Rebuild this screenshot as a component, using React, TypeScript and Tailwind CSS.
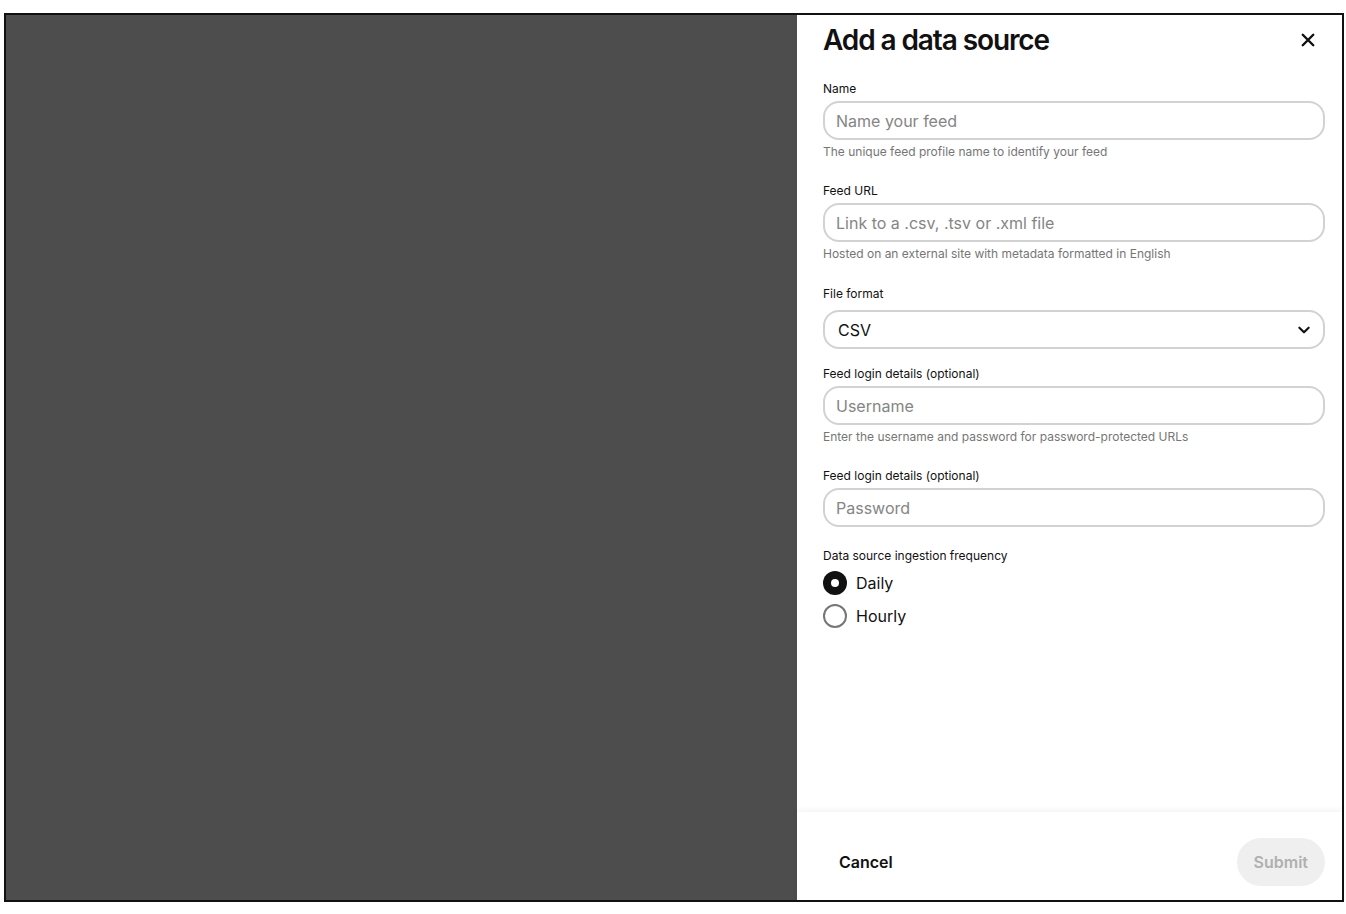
import React from "react";

const font = { fontFamily: "Inter, 'Liberation Sans', sans-serif" };

function Label({ children }: { children: React.ReactNode }) {
  return <div className="text-[12px] leading-4 text-[#111]">{children}</div>;
}

function Help({ children }: { children: React.ReactNode }) {
  return <div className="mt-1 text-[12px] leading-4 text-[#767676]">{children}</div>;
}

function Input({ placeholder }: { placeholder: string }) {
  return (
    <div className="mt-[4px] flex h-[39px] items-center rounded-2xl border-2 border-[#d2d2d2] px-[11px] text-[16px] text-[#858585]">
      {placeholder}
    </div>
  );
}

export default function App() {
  return (
    <div className="h-[914px] w-[1346px] bg-white pl-[4px] pt-[13px]" style={font}>
      <div className="flex h-[889px] w-[1340px] border-2 border-[#111]">
        <div className="flex-1 bg-[#4d4d4d]" />
        <div className="flex w-[545px] flex-col bg-white">
          <div className="flex-1 pl-[26px] pr-[17px] pt-[7px]">
            <div className="flex items-center justify-between">
              <h1 className="text-[28px] font-semibold leading-[36px] tracking-[-1.1px] text-[#111]">
                Add a data source
              </h1>
              <svg width="18" height="18" viewBox="0 0 24 24" className="mr-[8px]">
                <path d="M5 5 L19 19 M19 5 L5 19" stroke="#111" strokeWidth="3.2" strokeLinecap="round" />
              </svg>
            </div>

            <div className="mt-[23px]">
              <Label>Name</Label>
              <Input placeholder="Name your feed" />
              <Help>The unique feed profile name to identify your feed</Help>
            </div>

            <div className="mt-[23px]">
              <Label>Feed URL</Label>
              <Input placeholder="Link to a .csv, .tsv or .xml file" />
              <Help>Hosted on an external site with metadata formatted in English</Help>
            </div>

            <div className="mt-[24px]">
              <Label>File format</Label>
              <div className="mt-[8px] flex h-[39px] items-center justify-between rounded-2xl border-2 border-[#d2d2d2] pl-[13px] pr-[12px] text-[16px] text-[#111]">
                <span>CSV</span>
                <svg width="14" height="14" viewBox="0 0 24 24">
                  <path d="M4 8 L12 16 L20 8" fill="none" stroke="#111" strokeWidth="3.6" strokeLinecap="round" strokeLinejoin="round" />
                </svg>
              </div>
            </div>

            <div className="mt-[17px]">
              <Label>Feed login details (optional)</Label>
              <Input placeholder="Username" />
              <Help>Enter the username and password for password-protected URLs</Help>
            </div>

            <div className="mt-[23px]">
              <Label>Feed login details (optional)</Label>
              <Input placeholder="Password" />
            </div>

            <div className="mt-[21px]">
              <Label>Data source ingestion frequency</Label>
              <div className="mt-[7px] flex flex-col gap-[9px]">
                <div className="flex items-center gap-[9px]">
                  <div className="flex h-6 w-6 items-center justify-center rounded-full bg-[#111]">
                    <div className="h-2 w-2 rounded-full bg-white" />
                  </div>
                  <span className="text-[16px] text-[#111]">Daily</span>
                </div>
                <div className="flex items-center gap-[9px]">
                  <div className="h-6 w-6 rounded-full border-2 border-[#767676]" />
                  <span className="text-[16px] text-[#111]">Hourly</span>
                </div>
              </div>
            </div>
          </div>

          <div className="flex h-[88px] items-center justify-between pl-[26px] pr-[17px] pt-[12px] shadow-[0_-2px_6px_rgba(0,0,0,0.05)]">
            <button className="px-[16px] text-[16px] font-semibold text-[#111]">Cancel</button>
            <button className="h-12 rounded-full bg-[#efefef] px-[17px] text-[16px] font-semibold text-[#b0b0b0]">
              Submit
            </button>
          </div>
        </div>
      </div>
    </div>
  );
}
